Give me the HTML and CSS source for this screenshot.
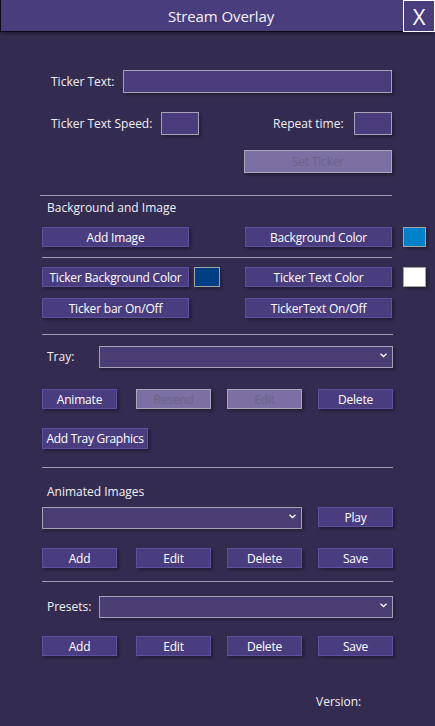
FILE: index.html
```html
<!DOCTYPE html>
<html>
<head>
<meta charset="utf-8">
<title>Stream Overlay</title>
<link rel="stylesheet" href="styles.css">
</head>
<body>
<div class="window">
  <div class="titlebar">
    <span class="title">Stream Overlay</span>
    <div class="close">X</div>
  </div>

  <div class="row r1">
    <span class="label l-ticker">Ticker Text:</span>
    <div class="input w-ticker"></div>
  </div>

  <div class="row r2">
    <span class="label l-speed">Ticker Text Speed:</span>
    <div class="input w-small"></div>
    <span class="label l-repeat">Repeat time:</span>
    <div class="input w-small"></div>
  </div>

  <div class="row r3">
    <div class="btn disabled w-set">Set Ticker</div>
  </div>

  <div class="line line-a"></div>

  <div class="section-title s-bg">Background and Image</div>

  <div class="row r-bg1">
    <div class="btn w-wide">Add Image</div>
    <div class="btn w-wide m-right">Background Color</div>
    <div class="swatch sw-blue m-swatch"></div>
  </div>

  <div class="line line-b"></div>

  <div class="row r-bg2">
    <div class="btn w-wide">Ticker Background Color</div>
    <div class="swatch sw-navy m-swatch-l"></div>
    <div class="btn w-wide m-right2">Ticker Text Color</div>
    <div class="swatch sw-white m-swatch"></div>
  </div>

  <div class="row r-bg3">
    <div class="btn w-wide">Ticker bar On/Off</div>
    <div class="btn w-wide m-right">TickerText On/Off</div>
  </div>

  <div class="line line-c"></div>

  <div class="row r-tray">
    <span class="label l-tray">Tray:</span>
    <div class="select w-select"><svg class="chev" width="7" height="5" viewBox="0 0 7 5"><path d="M0.5 0.8 L3.5 3.6 L6.5 0.8" fill="none" stroke="#ffffff" stroke-width="1.3"/></svg></div>
  </div>

  <div class="row r-tray-btns quad">
    <div class="btn">Animate</div>
    <div class="btn disabled">Resend</div>
    <div class="btn disabled">Edit</div>
    <div class="btn">Delete</div>
  </div>

  <div class="row r-addtray">
    <div class="btn w-addtray">Add Tray Graphics</div>
  </div>

  <div class="line line-d"></div>

  <div class="section-title s-anim">Animated Images</div>

  <div class="row r-anim">
    <div class="select w-anim-select"><svg class="chev" width="7" height="5" viewBox="0 0 7 5"><path d="M0.5 0.8 L3.5 3.6 L6.5 0.8" fill="none" stroke="#ffffff" stroke-width="1.3"/></svg></div>
    <div class="btn w-play">Play</div>
  </div>

  <div class="row r-anim-btns quad">
    <div class="btn">Add</div>
    <div class="btn">Edit</div>
    <div class="btn">Delete</div>
    <div class="btn">Save</div>
  </div>

  <div class="line line-e"></div>

  <div class="row r-presets">
    <span class="label l-presets">Presets:</span>
    <div class="select w-select"><svg class="chev" width="7" height="5" viewBox="0 0 7 5"><path d="M0.5 0.8 L3.5 3.6 L6.5 0.8" fill="none" stroke="#ffffff" stroke-width="1.3"/></svg></div>
  </div>

  <div class="row r-preset-btns quad">
    <div class="btn">Add</div>
    <div class="btn">Edit</div>
    <div class="btn">Delete</div>
    <div class="btn">Save</div>
  </div>

  <div class="version">Version:</div>
</div>
</body>
</html>
```

FILE: styles.css
```css
html, body {
  margin: 0;
  padding: 0;
  background: #342b50;
}
body {
  width: 435px;
  height: 726px;
  overflow: hidden;
  font-family: "Open Sans", "Noto Sans", "DejaVu Sans", sans-serif;
  font-size: 12px;
  color: #f2f0f6;
}
.window {
  width: 435px;
  height: 726px;
  position: relative;
}
.titlebar {
  position: relative;
  height: 31px;
  background: #4a3d7d;
  border-bottom: 1px solid #0c0a12;
  border-left: 1px solid #0c0a12;
  box-shadow: 0 2px 3px rgba(0, 0, 0, 0.35);
  display: flex;
  align-items: center;
  justify-content: center;
}
.title {
  font-size: 15px;
  color: #f4f2f8;
  padding-left: 6px;
  letter-spacing: -0.1px;
}
.close {
  position: absolute;
  right: 0;
  top: 0;
  width: 30px;
  height: 30px;
  border: 1px solid #ffffff;
  background: #4a3d7d;
  color: #ffffff;
  font-size: 22px;
  line-height: 30px;
  text-align: center;
}
.row {
  display: flex;
  align-items: center;
}
.label {
  white-space: nowrap;
  line-height: 16px;
}
.input, .select {
  box-sizing: border-box;
  background: #4a3c7c;
  border: 1px solid #a7a1b5;
  box-shadow: 2px 2px 3px rgba(0, 0, 0, 0.3);
}
.select {
  position: relative;
  height: 22px;
  background: #4a3d74;
  display: flex;
  align-items: center;
  justify-content: flex-end;
}
.chev {
  margin-right: 5px;
  margin-top: -3px;
}
.btn {
  box-sizing: border-box;
  height: 20px;
  background: #4a3d7f;
  border: 1px solid #5e50a0;
  box-shadow: 2px 2px 3px rgba(0, 0, 0, 0.35);
  color: #ffffff;
  display: flex;
  align-items: center;
  justify-content: center;
  white-space: nowrap;
  letter-spacing: -0.2px;
}
.btn.disabled {
  background: #7b6fa3;
  border-color: #aca6b8;
  color: #6d6488;
}
.swatch {
  box-sizing: border-box;
  width: 23px;
  height: 20px;
  border: 1px solid #a3a3a3;
  box-shadow: 2px 2px 3px rgba(0, 0, 0, 0.3);
}
.sw-blue { background: #0081c9; }
.sw-navy { background: #013f84; width: 26px; }
.sw-white { background: #ffffff; }

.line {
  height: 1px;
  background: #a29cae;
}

/* row 1 */
.r1 { margin-top: 38px; padding-left: 51px; height: 23px; }
.l-ticker { width: 72px; }
.w-ticker { width: 269px; height: 23px; }

.r2 { margin-top: 19px; padding-left: 51px; height: 23px; }
.l-speed { width: 110px; }
.l-repeat { margin-left: 74px; width: 81px; }
.w-small { width: 38px; height: 23px; }

.r3 { margin-top: 15px; padding-left: 244px; height: 23px; }
.w-set { width: 148px; height: 23px; }

.line-a { margin-top: 22px; margin-left: 40px; width: 352px; }

.section-title { padding-left: 47px; height: 16px; line-height: 16px; }
.s-bg { margin-top: 4px; }

.r-bg1 { margin-top: 11px; padding-left: 42px; }
.w-wide { width: 147px; }
.m-right { margin-left: 56px; }
.m-swatch { margin-left: 11px; }
.m-swatch-l { margin-left: 5px; }
.m-right2 { margin-left: 25px; }

.line-b { margin-top: 10px; margin-left: 42px; width: 350px; }

.r-bg2 { margin-top: 9px; padding-left: 42px; }
.r-bg3 { margin-top: 11px; padding-left: 42px; }

.line-c { margin-top: 16px; margin-left: 42px; width: 351px; }

.r-tray { margin-top: 11px; padding-left: 47px; height: 22px; }
.l-tray { width: 52px; }
.w-select { width: 294px; }

.quad { padding-left: 42px; gap: 0; }
.quad .btn { width: 75px; }
.quad .btn:nth-child(2) { margin-left: 19px; }
.quad .btn:nth-child(3) { margin-left: 16px; }
.quad .btn:nth-child(4) { margin-left: 16px; }

.r-tray-btns { margin-top: 21px; }

.r-addtray { margin-top: 19px; padding-left: 42px; }
.w-addtray { width: 106px; height: 21px; letter-spacing: -0.3px; }

.line-d { margin-top: 18px; margin-left: 42px; width: 351px; }

.s-anim { margin-top: 16px; }

.r-anim { margin-top: 7px; padding-left: 42px; height: 22px; align-items: flex-start; }
.w-anim-select { width: 260px; }
.w-play { width: 75px; margin-left: 16px; }

.r-anim-btns { margin-top: 19px; }

.line-e { margin-top: 13px; margin-left: 42px; width: 351px; }

.r-presets { margin-top: 14px; padding-left: 47px; height: 22px; }
.l-presets { width: 52px; }

.r-preset-btns { margin-top: 18px; }

.version { margin-top: 38px; padding-left: 316px; height: 16px; line-height: 16px; }
```
